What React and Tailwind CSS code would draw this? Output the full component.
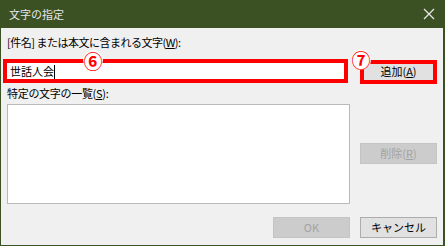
import React from "react";

const Circled = ({ children, className }) => (
  <div
    className={
      "absolute w-[20px] h-[20px] rounded-full bg-white flex items-center justify-center text-[#ff0000] text-[19px] font-bold leading-none " +
      className
    }
  >
    {children}
  </div>
);

const App = () => {
  return (
    <div
      className="w-[445px] h-[246px] flex flex-col bg-[#f0f0f0] border-l border-r-2 border-b border-[#3b5123] text-[11px] text-black overflow-hidden"
      style={{ fontFamily: '"Noto Sans CJK JP", "Noto Sans", sans-serif' }}
    >
      {/* title bar */}
      <div className="h-[28px] shrink-0 bg-[#3b5123] flex items-center justify-between pl-[8px] pr-[8px]">
        <span className="text-[#e6e6e6] text-[11px] leading-none">文字の指定</span>
        <svg width="12" height="12" viewBox="0 0 12 12">
          <path d="M1 1L11 11M11 1L1 11" stroke="#e6e6e6" strokeWidth="1.3" />
        </svg>
      </div>

      <div className="flex flex-col pl-[6px]">
        <div className="mt-[6px] h-[16px] leading-[16px] tracking-[-0.5px]">
          [件名] または本文に含まれる文字(<span className="underline">W</span>):
        </div>

        {/* input row */}
        <div className="mt-[13px] h-[17px] flex items-center">
          <div className="relative w-[338px] h-[17px] bg-white flex items-center pl-[3px]">
            <span className="leading-none">世話人会</span>
            <span className="w-px h-[14px] bg-black" />
            <div className="absolute -left-[4px] -right-[3px] -top-[4px] -bottom-[3px] border-[4px] border-[#ff0000]" />
            <Circled className="left-[76px] -top-[13px]">⑥</Circled>
          </div>
          <div className="relative ml-[18px] w-[71px] h-[16px] bg-[#e1e1e1] flex items-center justify-center">
            <span className="leading-none">
              追加(<span className="underline">A</span>)
            </span>
            <div className="absolute -left-[3px] -right-[3px] -top-[4px] -bottom-[4px] border-[4px] border-[#ff0000]" />
            <Circled className="-left-[12px] -top-[14px]">⑦</Circled>
          </div>
        </div>

        <div className="mt-[5px] h-[16px] leading-[16px] tracking-[-0.3px]">
          特定の文字の一覧(<span className="underline">S</span>):
        </div>

        {/* list + side buttons */}
        <div className="mt-[3px] flex">
          <div className="w-[343px] h-[100px] bg-white border border-[#b9b9b9]" />
          <div className="ml-[10px] flex flex-col">
            <div className="mt-[39px] w-[77px] h-[21px] bg-[#cccccc] border border-[#c4c4c4] flex items-center justify-center text-[#a3a3a3]">
              削除(<span className="underline">R</span>)
            </div>
          </div>
        </div>

        {/* bottom buttons */}
        <div className="mt-[13px] flex">
          <div className="ml-[266px] w-[77px] h-[21px] bg-[#cccccc] border border-[#c4c4c4] flex items-center justify-center text-[#a3a3a3]">
            OK
          </div>
          <div className="ml-[10px] w-[77px] h-[21px] bg-[#e1e1e1] border border-[#adadad] flex items-center justify-center">
            キャンセル
          </div>
        </div>
      </div>
    </div>
  );
};

export default App;
